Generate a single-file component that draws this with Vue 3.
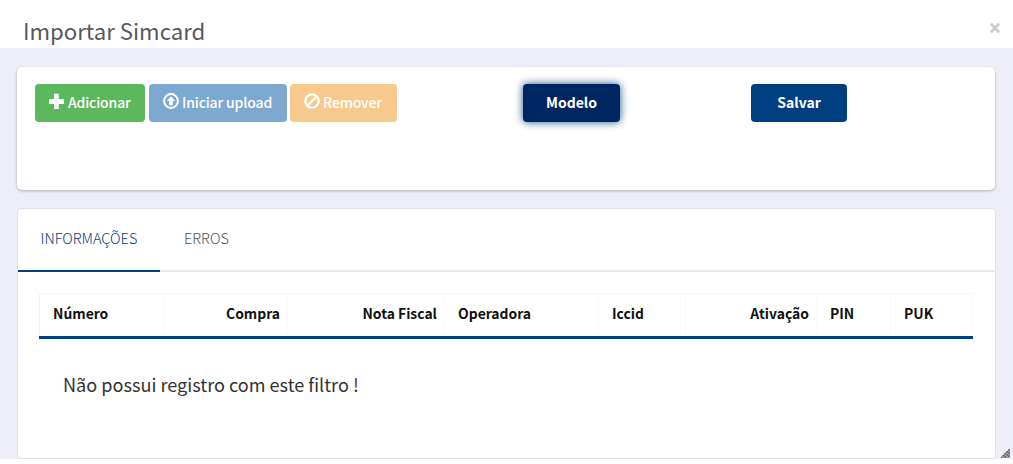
<script setup>
const columns = [
  { label: 'Número', width: 126 },
  { label: 'Compra', width: 123, right: true },
  { label: 'Nota Fiscal', width: 157, right: true },
  { label: 'Operadora', width: 154 },
  { label: 'Iccid', width: 87 },
  { label: 'Ativação', width: 131, right: true },
  { label: 'PIN', width: 74 },
  { label: 'PUK', width: 82 },
]
</script>

<template>
  <div class="modal">
    <header class="head">
      <h4>Importar Simcard</h4>
      <button class="close" aria-label="Fechar">
        <svg width="12" height="12" viewBox="0 0 12 12"><path d="M1.8 1.8 10.2 10.2M10.2 1.8 1.8 10.2" stroke="#ccc" stroke-width="2.8" /></svg>
      </button>
    </header>
    <main class="body">
      <section class="card actions">
        <button class="btn add">
          <svg width="16" height="16" viewBox="0 0 16 16"><path d="M5.5 0h5v5.5H16v5h-5.5V16h-5v-5.5H0v-5h5.5z" fill="#fff" transform="translate(-.3 .8) scale(.96)" /></svg>
          <span>Adicionar</span>
        </button>
        <button class="btn upload">
          <svg width="16" height="16" viewBox="0 0 16 16"><circle cx="8" cy="8" r="6.9" fill="none" stroke="#fff" stroke-width="2" /><path d="M8 3.2 12.2 8H9.8v4.2H6.2V8H3.8z" fill="#fff" /></svg>
          <span>Iniciar upload</span>
        </button>
        <button class="btn remove">
          <svg width="16" height="16" viewBox="0 0 16 16"><circle cx="8" cy="8" r="6.7" fill="none" stroke="#fff" stroke-width="2.3" /><path d="M3.6 12.4 12.4 3.6" stroke="#fff" stroke-width="2.3" /></svg>
          <span>Remover</span>
        </button>
        <button class="btn model"><span>Modelo</span></button>
        <button class="btn save"><span>Salvar</span></button>
      </section>
      <section class="card results">
        <nav class="tabs">
          <a class="tab active"><span>INFORMAÇÕES</span></a>
          <a class="tab"><span>ERROS</span></a>
        </nav>
        <div class="grid-head">
          <div v-for="c in columns" :key="c.label" class="cell" :class="{ right: c.right }" :style="{ width: c.width + 'px' }">
            <span>{{ c.label }}</span>
          </div>
        </div>
        <p class="empty"><span>Não possui registro com este filtro !</span></p>
      </section>
    </main>
    <svg class="grip" width="10" height="10" viewBox="0 0 10 10"><path d="M10 0V10H0z" fill="#aaa6ac" /><path d="M9.5 1.5 1.5 9.5M9.5 4.5 4.5 9.5M9.5 7.5 7.5 9.5" stroke="#4b464c" stroke-width="1.2" stroke-dasharray="1.6 1" /></svg>
  </div>
</template>

<style>
body { background: #fff; overflow: hidden; }
</style>
<style scoped>
* { box-sizing: border-box; }
.modal {
  position: relative;
  width: 1013px;
  height: 464px;
  font-family: "Noto Sans CJK JP", "Noto Sans", sans-serif;
  line-height: 20px;
}
.head {
  height: 48px;
  padding: 15px 12px 0 23px;
  display: flex;
  justify-content: space-between;
}
h4 { margin: 0; font-size: 22.2px; line-height: 30px; font-weight: 400; color: #58595b; }
.close { border: 0; background: none; padding: 7px 0 0; height: 19px; display: flex; }
.body { height: 411px; padding: 19px 17px 0; background: #eeeef8; }
.card { width: 979px; background: #fff; border-radius: 5px; }
.actions {
  width: 978px;
  height: 123px;
  padding: 17px 18px;
  display: flex;
  align-items: flex-start;
  box-shadow: 0 1px 3px rgba(0, 0, 0, .28);
}
.btn {
  flex: none;
  height: 38.4px;
  border: 0;
  border-radius: 4px;
  padding: 0 0 2px;
  display: flex;
  align-items: center;
  color: #fff;
  font: 500 14px/20px "Noto Sans CJK JP", sans-serif;
  letter-spacing: -.15px;
  white-space: nowrap;
}
.btn svg { margin: 0 3px 2px 14px; flex: none; }
.add { width: 110px; background: #5cb85c; }
.upload { width: 138px; margin-left: 4px; background: #7da9d0; }
.remove { width: 107px; margin-left: 3px; background: #f5ca8c; }
.model, .save { justify-content: center; font-weight: 700; letter-spacing: 0; }
.model { width: 97px; margin-left: 126px; background: #002662; box-shadow: 0 0 8px rgba(0, 64, 128, .9); }
.save { width: 96px; margin-left: 131px; background: #003f7f; }
.results { height: 250.5px; margin-top: 18px; border: 1px solid #e1e1e5; border-radius: 4px; }
.tabs { height: 63px; display: flex; border-bottom: 2px solid #e8e8e8; }
.tab { height: 63px; padding: 19px 22.5px 0; font-size: 14.5px; font-weight: 300; color: #505153; }
.tab.active { width: 142px; color: #004080; border-bottom: 2px solid #004080; }
.tab + .tab { padding-left: 24px; }
.grid-head {
  display: flex;
  width: 934px;
  height: 46px;
  margin: 21px 0 0 21px;
  border-top: 1px solid #f5f5f5;
  border-bottom: 3px solid #004080;
  box-shadow: inset 1px 0 #f5f5f5;
}
.cell { flex: none; padding: 9px 7px 0 13px; border-right: 1px solid #f8f8f8; font-size: 13.9px; font-weight: 700; color: #111; white-space: nowrap; }
.cell:first-child { padding-left: 14px; }
.right { text-align: right; }
.empty { margin: 34px 0 0 45px; font-size: 18.1px; font-weight: 400; color: #333; line-height: 22px; }
.grip { position: absolute; right: 3px; bottom: 6px; }
</style>
